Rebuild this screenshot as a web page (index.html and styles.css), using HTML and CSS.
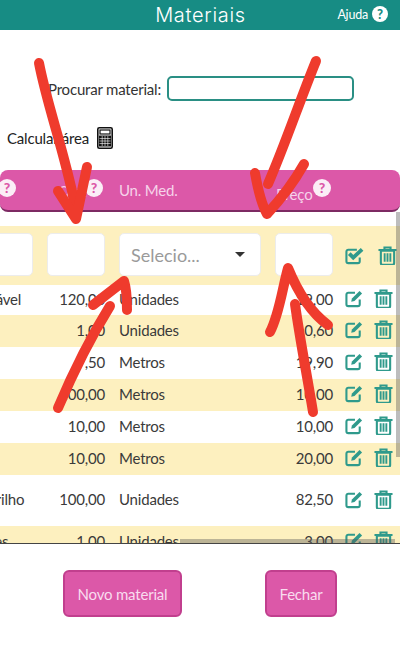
FILE: index.html
```html
<!DOCTYPE html>
<html lang="pt">
<head>
    <meta charset="UTF-8">
    <title>Materiais</title>
    <link rel="stylesheet" href="styles.css">
</head>

<body>

<!-- Icon set -->
<svg class="icon-defs" aria-hidden="true">
    <symbol id="i-edit" viewBox="0 0 20 20">
        <path d="M15.5 11v5a2 2 0 0 1-2 2H3.5a2 2 0 0 1-2-2V6a2 2 0 0 1 2-2h7" fill="none" stroke="currentColor" stroke-width="2.2"/>
        <path d="M6.5 13.5l.8-3.5 8-8 2.7 2.7-8 8z" fill="currentColor"/>
    </symbol>
    <symbol id="i-check" viewBox="0 0 20 20">
        <path d="M15.5 12v4a2 2 0 0 1-2 2H3.5a2 2 0 0 1-2-2V6a2 2 0 0 1 2-2h9" fill="none" stroke="currentColor" stroke-width="2.2"/>
        <path d="M4.5 8l4.2 4.2 9.3-8.7" fill="none" stroke="currentColor" stroke-width="4"/>
    </symbol>
    <symbol id="i-trash" viewBox="0 0 20 20">
        <path d="M.5 4.2h19M6.8 4V1.5h6.4V4" fill="none" stroke="currentColor" stroke-width="2.2"/>
        <path d="M3 5h14v13a1.8 1.8 0 0 1-1.8 1.8H4.8A1.8 1.8 0 0 1 3 18z" fill="none" stroke="currentColor" stroke-width="2.2"/>
        <path d="M7 7.5v9M10 7.5v9M13 7.5v9" fill="none" stroke="currentColor" stroke-width="2"/>
    </symbol>
</svg>

<!-- Header -->
<header class="top-bar">
    <h1 class="title">Materiais</h1>
    <a class="help">Ajuda <span class="help-dot">?</span></a>
</header>

<!-- Search -->
<div class="search-row">
    <label class="search-label">Procurar material:</label>
    <input class="search-input" type="text">
</div>

<div class="calc-row">
    <span>Calcular área</span>
    <svg class="calc-icon" viewBox="0 0 16 22">
        <rect x="0.8" y="0.8" width="14.4" height="20.4" rx="1.5" fill="none" stroke="#111" stroke-width="1.6"/>
        <rect x="3" y="3" width="10" height="4" fill="none" stroke="#111" stroke-width="1.2"/>
        <path d="M2 8.5h12v11H2z" fill="#111"/>
        <path d="M5.2 9v10M8 9v10M10.8 9v10M2.5 11.5h11M2.5 14h11M2.5 16.5h11" stroke="#fff" stroke-width="0.6"/>
    </svg>
</div>

<!-- Table head -->
<div class="table-head">
    <span class="head-dot head-dot-first">?</span>
    <span class="head-qtd">Qtd.</span>
    <span class="head-dot head-dot-qtd">?</span>
    <span class="head-unit">Un. Med.</span>
    <span class="head-price">Preço</span>
    <span class="head-dot head-dot-price">?</span>
</div>

<!-- Table body -->
<div class="table-wrap">
    <table class="materials">
        <colgroup>
            <col class="col-name"><col class="col-num"><col class="col-unit"><col class="col-num"><col class="col-actions">
        </colgroup>
        <tr class="filter-row">
            <td><input class="cell-input" type="text"></td>
            <td><input class="cell-input" type="text"></td>
            <td>
                <div class="cell-select"><span>Selecio...</span><i class="caret"></i></div>
            </td>
            <td><input class="cell-input" type="text"></td>
            <td class="actions">
                <svg class="icon"><use href="#i-check"/></svg>
                <svg class="icon"><use href="#i-trash"/></svg>
            </td>
        </tr>
        <tr class="row-first">
            <td>Cortina lavável</td><td class="num">120,00</td><td>Unidades</td><td class="num">19,00</td>
            <td class="actions"><svg class="icon"><use href="#i-edit"/></svg><svg class="icon"><use href="#i-trash"/></svg></td>
        </tr>
        <tr class="row-alt">
            <td>Cola</td><td class="num">1,00</td><td>Unidades</td><td class="num">10,60</td>
            <td class="actions"><svg class="icon"><use href="#i-edit"/></svg><svg class="icon"><use href="#i-trash"/></svg></td>
        </tr>
        <tr>
            <td>Fita</td><td class="num">9,50</td><td>Metros</td><td class="num">19,90</td>
            <td class="actions"><svg class="icon"><use href="#i-edit"/></svg><svg class="icon"><use href="#i-trash"/></svg></td>
        </tr>
        <tr class="row-alt">
            <td>Cabo</td><td class="num">100,00</td><td>Metros</td><td class="num">10,00</td>
            <td class="actions"><svg class="icon"><use href="#i-edit"/></svg><svg class="icon"><use href="#i-trash"/></svg></td>
        </tr>
        <tr>
            <td>Fio</td><td class="num">10,00</td><td>Metros</td><td class="num">10,00</td>
            <td class="actions"><svg class="icon"><use href="#i-edit"/></svg><svg class="icon"><use href="#i-trash"/></svg></td>
        </tr>
        <tr class="row-alt">
            <td>Tubo</td><td class="num">10,00</td><td>Metros</td><td class="num">20,00</td>
            <td class="actions"><svg class="icon"><use href="#i-edit"/></svg><svg class="icon"><use href="#i-trash"/></svg></td>
        </tr>
        <tr class="row-tall">
            <td>Piso de ladrilho</td><td class="num">100,00</td><td>Unidades</td><td class="num">82,50</td>
            <td class="actions"><svg class="icon"><use href="#i-edit"/></svg><svg class="icon"><use href="#i-trash"/></svg></td>
        </tr>
        <tr class="row-alt">
            <td>Adaptadores</td><td class="num">1,00</td><td>Unidades</td><td class="num">3,00</td>
            <td class="actions"><svg class="icon"><use href="#i-edit"/></svg><svg class="icon"><use href="#i-trash"/></svg></td>
        </tr>
    </table>
    <div class="scroll-v"></div>
    <div class="scroll-h"></div>
</div>

<!-- Buttons -->
<div class="button-row">
    <button class="btn">Novo material</button>
    <button class="btn btn-small">Fechar</button>
</div>

<!-- Red arrows drawn over the page -->
<svg class="arrows" viewBox="0 0 400 662">
    <g fill="none" stroke="#ef3b2d" stroke-width="10" stroke-linecap="round" stroke-linejoin="round">
        <path d="M39 63C47 105 64 150 75 205"/>
        <path d="M58 191L76 219L87 167"/>
        <path d="M316 61C300 100 285 145 268 184"/>
        <path d="M255 173C258 190 262 205 267 214C280 200 295 180 304 164"/>
        <path d="M58 408C72 375 92 335 110 306"/>
        <path d="M93 305L124 281C127 290 127 300 127 310"/>
        <path d="M313 412C307 375 300 340 295 304"/>
        <path d="M270 332C279 315 282 290 288 268C297 290 310 312 328 325"/>
    </g>
</svg>

</body>
</html>
```

FILE: styles.css
```css
html, body {
    margin: 0;
    padding: 0;
    height: 100%;
    background: #fff;
    overflow: hidden;
    font-family: Lato, "Noto Sans", sans-serif;
    letter-spacing: -0.2px;
    color: #333;
}

.icon-defs {
    display: none;
}

/* Header */
.top-bar {
    height: 30px;
    background: #178c84;
    color: #fff;
    display: flex;
    justify-content: center;
    align-items: center;
    position: relative;
}

.title {
    margin: 0 0 0 1px;
    font-family: Inter, sans-serif;
    font-size: 20px;
    font-weight: 300;
    letter-spacing: 0.7px;
}

.help {
    position: absolute;
    right: 12px;
    top: 6px;
    display: flex;
    align-items: center;
    gap: 4px;
    font-size: 12.5px;
}

.help-dot {
    width: 16px;
    height: 16px;
    border-radius: 50%;
    background: #fff;
    color: #178c84;
    font-size: 13px;
    font-weight: 900;
    line-height: 16px;
    text-align: center;
}

/* Search */
.search-row {
    display: flex;
    align-items: center;
    justify-content: flex-end;
    gap: 6px;
    padding: 46px 46px 0 0;
}

.search-label {
    font-size: 15px;
    color: #333;
}

.search-input {
    width: 187px;
    height: 25px;
    box-sizing: border-box;
    border: 2px solid #2a8f84;
    border-radius: 5px;
    background: #fff;
}

.calc-row {
    display: flex;
    align-items: center;
    gap: 8px;
    padding: 26px 0 0 7px;
    font-size: 15px;
    color: #222;
}

.calc-icon {
    width: 16px;
    height: 22px;
}

/* Table head */
.table-head {
    height: 42px;
    margin-top: 21px;
    box-sizing: border-box;
    background: #dc58a8;
    border-bottom: 2px solid #7d2a63;
    border-radius: 8px;
    color: #f6d3ea;
    font-size: 15px;
    position: relative;
}

.table-head span {
    position: absolute;
}

.head-dot {
    width: 18px;
    height: 18px;
    border-radius: 50%;
    background: #fbeef6;
    color: #dc58a8;
    font-size: 14px;
    font-weight: 900;
    line-height: 18px;
    text-align: center;
    top: 9px;
}

.head-dot-first {
    left: -2px;
}

.head-dot-qtd {
    left: 85px;
}

.head-dot-price {
    left: 313px;
}

.head-qtd {
    left: 58px;
    top: 12px;
}

.head-unit {
    left: 119px;
    top: 11px;
}

.head-price {
    left: 276px;
    top: 15px;
}

/* Table body */
.table-wrap {
    height: 332px;
    box-sizing: border-box;
    border-bottom: 1px solid #444;
    overflow: hidden;
    position: relative;
}

.materials {
    width: 480px;
    margin: 14px 0 0 -80px;
    table-layout: fixed;
    border-collapse: collapse;
    font-size: 15px;
    color: #3a3a3a;
}

.col-name {
    width: 120px;
}

.col-num {
    width: 72px;
}

.col-unit {
    width: 156px;
}

.col-actions {
    width: 60px;
}

.materials td {
    padding: 0 7px 3px;
    white-space: nowrap;
    height: 32px;
    box-sizing: border-box;
}

.materials .num {
    text-align: right;
}

.materials .row-first td {
    height: 30px;
}

.materials .row-tall td {
    height: 51px;
}

.row-alt td,
.filter-row td {
    background: #fdf0bf;
}

.materials .filter-row td {
    height: 59px;
    padding-bottom: 2px;
}

.cell-input,
.cell-select {
    display: block;
    width: 100%;
    height: 43px;
    box-sizing: border-box;
    border: 1px solid #ececec;
    border-radius: 5px;
    background: #fff;
}

.cell-select {
    display: flex;
    align-items: center;
    justify-content: space-between;
    padding: 0 15px 0 11px;
    font-size: 18px;
    letter-spacing: 0;
    color: #9a9a9a;
}

.caret {
    width: 0;
    height: 0;
    border-left: 5px solid transparent;
    border-right: 5px solid transparent;
    border-top: 5px solid #333;
}

.materials .actions {
    padding: 0 6px 4px 5px;
    vertical-align: middle;
}

.icon {
    display: inline-block;
    width: 19px;
    height: 19px;
    color: #2f9a8c;
    vertical-align: middle;
}

.icon + .icon {
    margin-left: 10px;
}

/* Fake scrollbars */
.scroll-v {
    position: absolute;
    top: 0;
    right: 0;
    width: 4px;
    height: 245px;
    background: rgba(90, 90, 90, 0.4);
}

.scroll-h {
    position: absolute;
    left: 180px;
    right: 5px;
    bottom: 0;
    height: 4px;
    background: rgba(90, 90, 90, 0.4);
}

/* Buttons */
.button-row {
    display: flex;
    gap: 83px;
    padding: 26px 0 0 63px;
}

.btn {
    height: 47px;
    width: 119px;
    padding: 0;
    background: #dc58a8;
    border: 2px solid #c13f8e;
    border-radius: 6px;
    color: #f9dcef;
    font-family: Lato, "Noto Sans", sans-serif;
    font-size: 15px;
    letter-spacing: -0.2px;
}

.btn-small {
    width: 72px;
}

/* Arrows */
.arrows {
    position: absolute;
    top: 0;
    left: 0;
    width: 400px;
    height: 662px;
    pointer-events: none;
}
```
